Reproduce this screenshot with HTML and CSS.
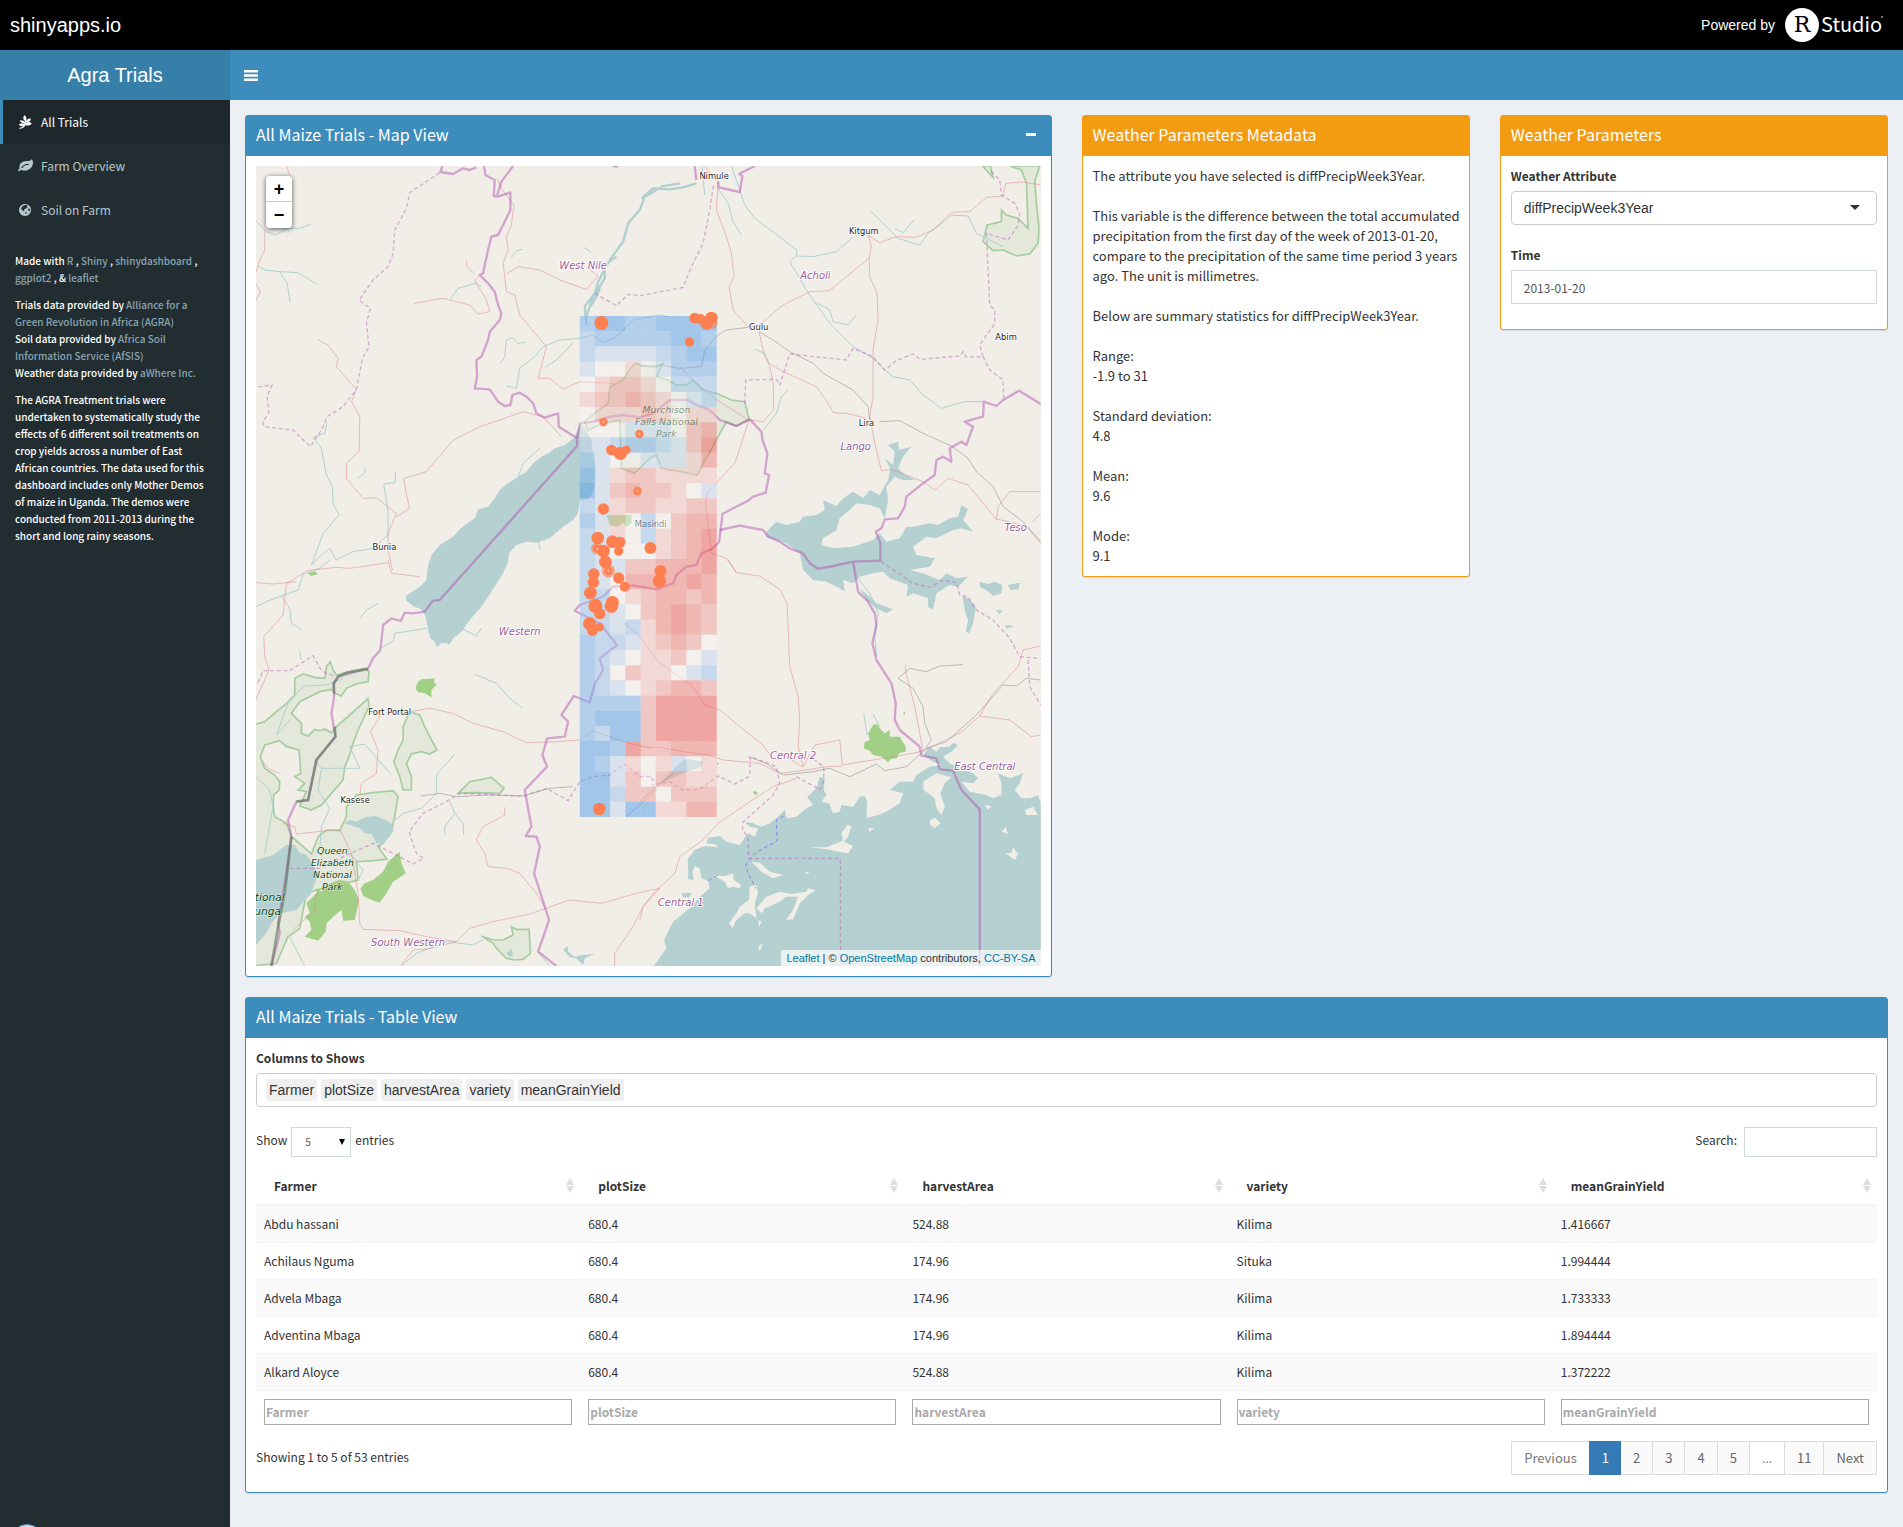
FILE: index.html
```html
<!DOCTYPE html>
<html lang="en">
<head>
<meta charset="utf-8">
<title>Agra Trials</title>
<link rel="stylesheet" href="styles.css">
</head>
<body>
<div class="hostbar">
  <a class="hostbar-name" href="#">shinyapps.io</a>
  <a class="hostbar-brand" href="#">
    <span>Powered by</span>
    <svg class="rstudio" viewBox="0 0 98 36" role="img" aria-label="RStudio">
      <circle cx="17" cy="18" r="17" fill="#fff"/>
      <text x="17" y="25" class="rstudio-r" text-anchor="middle">R</text>
      <text x="36" y="25" class="rstudio-name">Studio</text>
      <circle cx="97" cy="10" r="1" fill="#999"/>
    </svg>
  </a>
</div>

<header class="header">
  <a class="logo" href="#">Agra Trials</a>
  <nav class="navbar">
    <button class="toggle" type="button" aria-label="Toggle navigation">
      <svg viewBox="0 0 14 11"><path d="M0 0h14v2.500H0zM0 4.250h14v2.500H0zM0 8.500h14v2.500H0z"/></svg>
    </button>
  </nav>
</header>

<div class="wrapper">
  <aside class="sidebar">
    <nav class="menu">
      <a class="menu-item active" href="#">
        <svg viewBox="0 0 14 14"><path d="M1 13.700C.7 13.500.6 13 .9 12.700 3 12.400 4 12 5 11.200 3.500 11.600 1.300 11 .3 9.200 2.200 8 4.500 8.200 5.800 9.400L6.100 8.600C4.300 8.700 2 7.600 1.300 5.200 3.900 4.900 5.900 5.900 6.400 7.300L6.500 5.800C4.800 5.100 4.200 2.500 5.800.3 8 1.500 8.500 4 7.600 5.600L7.500 6.400C8 4.800 9.800 3.200 12.300 3.600 12.400 6 10.500 7.600 7.700 7.600L7.400 8.500C8.700 7.200 11.400 6.700 13.300 8.200 12.200 10.300 9.300 11 7.200 9.900 6 12.300 4 13.600 1 13.700z"/></svg>
        <span>All Trials</span>
      </a>
      <a class="menu-item" href="#">
        <svg viewBox="0 128 1792 1536"><path d="M1280 704q0-26-19-45t-45-19q-172 0-318 49.500t-259.500 134-235.500 219.500q-19 21-19 45 0 26 19 45t45 19q24 0 45-19 27-24 74-71t67-66q137-124 268.500-176t313.500-52q26 0 45-19t19-45zM1792 506q0 95-20 193-46 224-184.500 383t-357.500 268q-214 108-438 108-148 0-286-47-15-5-88-42t-96-37q-16 0-39.500 32t-45 70-52.500 70-60 32q-43 0-63.500-17.500t-45.500-59.500q-2-4-6-11t-5.500-10-3-9.500-1.500-13.500q0-35 31-73.500t68-65.500 68-56 31-48q0-4-14-38t-16-44q-9-51-9-104 0-115 43.500-220t119-184.500 170.500-139 204-95.500q55-18 145-25.500t179.500-9 178.500-6 163.500-24 113.500-56.500l29.500-29.500t29.500-28 27-20 36.500-16 43.500-4.500q39 0 70.500 46t47.500 112 24 124 8 96z"/></svg>
        <span>Farm Overview</span>
      </a>
      <a class="menu-item" href="#">
        <svg viewBox="0 0 14 14"><path fill-rule="evenodd" d="M6.500 1a6 6 0 1 0 .01 0zM6.500 2 8.600 2.300 9.300 3.200 8.300 3.600 9 4.400 7.800 5 7 6 6 6.300 5.200 7 6 7.800 5.600 8.500 4.400 7.400 3 6.500 2.800 5 4 3.200zM9.700 5.700 10.800 5.200 11.400 6.400 11.100 8 10.300 8.200 9.500 7.200zM7 9 8.400 9.400 8 10.600 7 11.300z"/></svg>
        <span>Soil on Farm</span>
      </a>
    </nav>
    <div class="credits">
      <p>Made with <a href="#">R</a> , <a href="#">Shiny</a> , <a href="#">shinydashboard</a> , <br><a href="#">ggplot2</a> , &amp; <a href="#">leaflet</a></p>
      <p>Trials data provided by <a href="#">Alliance for a<br>Green Revolution in Africa (AGRA)</a><br>
        Soil data provided by <a href="#">Africa Soil<br>Information Service (AfSIS)</a><br>
        Weather data provided by <a href="#">aWhere Inc.</a></p>
      <p>The AGRA Treatment trials were<br>undertaken to systematically study the<br>effects of 6 different soil treatments on<br>crop yields across a number of East<br>African countries. The data used for this<br>dashboard includes only Mother Demos<br>of maize in Uganda. The demos were<br>conducted from 2011-2013 during the<br>short and long rainy seasons.</p>
    </div>
    <div class="status-dot"></div>
  </aside>

  <main class="content">
    <section class="box primary map-box">
      <header class="box-header">
        <h2>All Maize Trials - Map View</h2>
        <button class="collapse" type="button" aria-label="Collapse"></button>
      </header>
      <div class="box-body">
        <div class="map">
          <svg class="map-canvas" viewBox="48 48 2355 2400" preserveAspectRatio="xMidYMid slice" role="img" aria-label="Map of Uganda with maize trials">
            <g class="park">
              <path transform="translate(0 1230)" d="M40 495 75 485 110 455 140 430 165 405 165 355 190 342 225 352 255 355 260 320 272 305 280 330 290 345 340 332 375 325 388 335 385 365 350 372 320 385 305 408 285 400 275 388 240 395 210 410 180 425 155 460 185 490 185 520 205 528 225 508 240 512 255 507 275 518 290 500 330 465 385 415 388 440 355 510 340 550 328 590 315 620 310 660 280 695 245 735 215 750 180 738 200 695 175 690 195 670 165 650 183 640 178 570 140 560 120 542 75 555 62 590 75 625 105 645 120 665 118 690 102 705 100 740 105 770 140 790 155 830 185 855 215 882 235 830 260 810 300 812 320 770 320 740 350 705 400 698 460 692 475 710 465 770 458 800 430 850 415 860 442 898 400 902 350 905 355 960 230 990 200 1000 180 1105 160 1120 145 1130 110 1210 40 1218Z"/>
              <path transform="translate(0 1230)" d="M510 455 540 465 555 500 570 530 592 570 570 582 545 575 515 582 500 610 515 650 515 690 490 690 480 650 462 605 475 570 490 540 490 500ZM655 700 690 665 755 652 793 685 780 700 700 698ZM725 1128 760 1140 790 1140 820 1125 815 1100 830 1108 868 1108 872 1180 850 1198 825 1200 800 1195 770 1165 760 1150Z"/>
              <path transform="translate(960 450)" d="M85 392 75 365 110 335 145 310 150 260 190 240 205 215 225 190 265 200 290 200 310 190 290 230 325 240 350 255 380 255 400 240 430 270 470 280 515 300 555 305 568 358 530 378 500 365 412 525 360 515 305 505 290 465 270 475 250 495 225 520 185 505 180 360 135 370 105 380Z"/>
              <path transform="translate(1200 0)" d="M1085 180 1100 195 1135 205 1165 235 1160 100 1145 60 1110 48 1200 48 1185 95 1190 160 1198 235 1195 280 1170 312 1130 318 1090 300 1060 302 1030 275 1042 225 1085 215ZM1028 48 1060 82 1052 48Z"/>
            </g>
            <g class="forest">
              <path transform="translate(0 1230)" d="M527 385 535 365 545 358 565 357 585 355 583 370 592 372 575 390 575 412 555 400 535 397ZM200 1030 230 1000 230 985 245 995 270 970 300 960 325 965 345 990 358 1020 345 1080 310 1082 305 1050 280 1070 260 1090 258 1115 235 1142 195 1130 215 1110 210 1085 195 1070 210 1060ZM362 985 375 970 400 960 430 935 445 905 480 875 485 910 498 940 460 965 440 1000 420 1028 395 1020 370 1008ZM202 40 225 34 235 42 215 48Z"/>
              <path transform="translate(1200 1230)" d="M685 520 700 495 712 492 722 507 735 520 750 510 750 530 780 530 798 560 798 575 780 578 770 595 752 598 745 607 725 590 700 585 690 572 672 565 675 545 690 540ZM342 692 355 698 348 706 340 698ZM790 455 797 458 794 466ZM230 606 238 610 234 616Z"/>
              <path d="M1100 1095 1175 1095 1175 1120 1160 1130 1150 1118 1135 1130 1110 1125Z"/>
            </g>
            <g class="water">
              <path d="M1005 862 975 885 945 895 930 908 905 920 880 940 860 965 835 980 800 1003 780 1020 765 1045 745 1070 715 1078 705 1105 680 1122 660 1138 640 1160 600 1185 575 1215 565 1245 560 1290 540 1310 498 1338 500 1352 520 1368 545 1378 558 1400 565 1440 572 1465 585 1475 592 1492 605 1478 630 1482 640 1465 665 1445 690 1410 725 1370 755 1325 790 1270 805 1235 808 1210 830 1185 860 1175 890 1178 930 1165 970 1130 1000 1110 1015 1090 1020 1050 1045 1048 1058 1030 1065 1000 1067 950 1058 900 1055 870 1035 835 1020 820Z"/>
              <path transform="translate(1200 1230)" d="M42 1218 80 1165 73 1140 100 1085 150 1045 180 1010 210 985 205 962 185 955 180 925 165 918 158 935 162 960 145 958 145 895 165 870 195 858 235 862 225 852 200 850 205 833 240 828 260 845 300 855 310 840 325 820 345 830 355 805 330 800 315 785 340 790 365 800 390 790 410 775 435 750 440 775 470 770 500 745 520 735 502 712 530 685 540 650 555 655 552 690 560 705 545 725 568 730 580 760 600 755 605 735 640 740 660 710 675 708 682 725 680 775 715 765 740 755 780 730 790 700 820 695 790 700 750 690 780 665 820 665 830 645 870 620 905 615 880 605 850 585 868 560 890 575 900 562 930 560 940 548 955 555 935 575 910 590 930 610 960 625 1000 640 1015 655 1000 670 965 665 990 695 1040 705 1060 715 1085 705 1085 670 1075 640 1110 655 1150 640 1140 670 1125 690 1145 715 1170 715 1195 705 1203 730 1203 1218Z"/>
              <path transform="translate(1200 0)" d="M380 1145 410 1115 440 1125 480 1115 490 1100 530 1095 555 1080 550 1050 590 1068 610 1045 640 1025 670 1045 690 1020 720 1035 745 990 752 955 735 925 760 945 765 905 745 885 775 875 778 900 815 890 790 920 775 955 790 970 825 990 790 990 765 980 740 1010 745 1050 735 1105 720 1075 690 1065 650 1060 630 1080 600 1105 590 1140 550 1165 545 1185 580 1195 640 1190 700 1170 720 1150 740 1175 780 1165 800 1130 820 1130 870 1120 895 1125 930 1105 955 1100 965 1065 985 1078 970 1110 1000 1145 965 1135 940 1140 890 1165 860 1160 820 1190 830 1215 885 1225 870 1250 810 1260 850 1270 900 1290 920 1270 950 1285 985 1280 955 1310 930 1305 890 1330 880 1380 865 1370 865 1345 820 1330 800 1340 805 1305 750 1285 730 1265 700 1270 660 1280 640 1300 610 1290 615 1325 600 1315 560 1295 520 1290 490 1260 480 1210 440 1180 380 1160Z"/>
              <path transform="translate(1200 1230)" d="M1018 65 1045 72 1065 65 1088 75 1085 100 1060 108 1040 90 1022 82ZM1105 75 1142 68 1135 88 1112 90ZM968 108 985 115 1008 140 1000 190 988 220 978 215 985 180 975 150ZM1068 150 1090 152 1078 162ZM1095 195 1124 198 1100 206ZM660 85 690 110 710 130 760 148 740 160 710 145 680 120ZM125 1000 155 998 150 1012 130 1012ZM90 640 130 600 150 598 190 605 185 620 130 640 85 660 55 675Z"/>
              <path transform="translate(0 1230)" d="M48 900 100 885 140 855 165 855 180 878 200 885 215 905 235 940 215 1000 170 1050 120 1060 95 1090 80 1120 48 1155ZM315 790 330 780 350 785 375 772 405 768 440 780 455 792 462 810 450 830 430 852 410 850 395 822 375 820 360 805ZM970 1170 985 1158 985 1175 1005 1190 1030 1185 1065 1182 1035 1195 1030 1215 1010 1195 990 1192ZM800 1180 815 1165 820 1185 810 1192Z"/>
            </g>
            <g class="land" transform="translate(1200 1230)">
              <path d="M510 862 560 862 590 850 610 842 605 820 622 795 635 798 625 830 612 845 640 858 625 880 600 876 560 868ZM850 665 890 640 935 652 915 670 902 700 915 740 905 765 890 745 885 715 852 690ZM870 782 885 772 902 790 885 805 872 795ZM1098 880 1115 878 1120 862 1135 882 1125 900 1112 890ZM1085 815 1098 800 1104 822ZM1155 750 1180 740 1195 765 1160 765ZM1035 735 1055 738 1045 750ZM220 945 255 948 280 940 282 960 305 975 300 985 278 980 265 985 255 965ZM330 980 350 975 355 1000 345 1030 350 1075 330 1060 315 1060 290 1080 278 1105 268 1090 290 1060 300 1040 328 1020ZM335 905 360 908 390 935 430 945 400 955 365 935ZM380 1010 420 995 455 1002 500 995 505 985 528 990 505 1005 480 1030 460 1078 438 1080 460 1050 475 1010 440 1010 420 1025 375 1045 365 1060 350 1045ZM685 805 705 803 690 815ZM495 935 510 938 500 942ZM355 1080 365 1085 358 1102ZM370 1150 360 1175 355 1160ZM385 1150 380 1175Z"/>
            </g>
            <g class="stream">
              <path d="M48 212 80 245 110 255 140 235 180 235 215 222M55 348 75 360 120 365 175 368 230 402M120 365 142 400 152 458M632 447 655 415 705 400 725 410M815 323 830 302 848 298M1032 292 1055 308M782 640 795 620 800 570 820 563 835 580 858 577M800 708 830 715 840 655 885 620 910 590 960 570 1020 565 1060 555 1090 578 1130 560 1180 510 1260 495 1285 500M915 652 950 630 980 600 1000 578M835 982 850 940 900 895M355 985 375 968 377 952M468 965 465 998 432 1002 445 1085 445 1155 400 1195 340 1205 290 1230 270 1195 245 1215 215 1245M262 815 255 850 220 862 245 895 260 975 278 1010 280 1060 298 1095 250 1150 215 1245M895 1175 902 1198"/>
              <path class="river" d="M1040 525 1035 470 1065 430 1075 395 1110 330 1150 275 1165 220 1200 180 1215 140 1270 108 1320 100M1040 500 1060 440 1095 385 1095 345 1130 320M1205 145 1240 115 1290 118 1330 112 1370 100M1085 400 1070 440 1045 480"/>
              <path transform="translate(1200 0)" d="M187 48 195 135M235 115 265 160 280 215 305 255M275 48 300 120 315 165 345 205 405 250 470 300 470 318 520 320 590 305 640 260M690 182 710 200 775 265 840 285 865 250 900 225 935 195 985 198 1010 250 1090 290M470 318 450 335 500 420 570 520 640 590M535 460 570 480 580 515 625 525 650 495M825 208 790 248 765 235M345 598 375 610 388 640M445 720 425 740 410 790 370 840M640 590 675 610 700 625 735 660 760 680 810 690 850 735 905 775 975 755 1030 755M1203 1090 1180 1115"/>
              <path transform="translate(0 1230)" d="M270 0 240 25 190 42 175 90 125 108 80 125 48 140M125 108 150 145 155 190 185 208M362 175 380 150 415 130M425 262 460 245 465 220 560 205M665 205 710 228 725 205M705 343 770 370 805 410 848 445M310 355 260 375 190 378 145 430 110 525 150 480M48 650 90 690 100 740 75 880M645 582 590 645 590 700 545 745 490 760 460 785M630 725 645 760 615 800 615 825M645 760 670 790 672 825M225 600 245 625 360 625 330 560 375 552 455 645M245 625 235 690 270 745 245 800 240 870M150 1130 165 1160 195 1218M485 1218 530 1180 620 1145 700 1155 730 1140M895 1175 930 1218M180 275 185 300M355 905 330 880 370 930 355 960"/>
              <path transform="translate(1200 1230)" d="M672 460 682 525M700 462 720 500M650 50 690 100 715 160 705 230 710 290"/>
            </g>
            <g class="road">
              <path d="M140 48 155 90M75 240 75 300 60 330 48 370M48 400 62 425 48 452M232 568 265 585 295 625 290 650 350 718 335 755 360 800 358 905 320 940 320 985 370 1045 410 1043 470 1090 445 1150 445 1200 458 1260M470 1100 510 1075 500 1035 492 985 560 965 640 870 720 830 780 810 850 785 910 800 965 860M772 85 785 115 822 165 815 225 800 260 805 300 790 340 800 425 825 435 840 495 920 590 895 685 930 685 970 718 1020 695 1120 700M800 372 835 350 900 360 960 390 1040 418 1075 378 1045 355M522 460 610 445 690 465 715 492 750 485 740 450 705 390 720 375M680 332 682 350 705 372"/>
              <path transform="translate(1200 0)" d="M195 48 235 95 230 180 260 260 275 310 283 380 268 410 280 480 325 530 358 525 430 465 510 425 570 422 620 380 688 325 695 290 685 255 720 278 770 260 830 262 880 240 935 187 990 185 1040 142 1090 138 1098 100 1150 96 1203 105M688 325 690 380 712 430 715 510 700 600 700 740 690 800 705 880 725 962 755 958 850 995 885 1020 925 985 985 1005 1070 1108 1095 1112M1070 1108 1075 1070 1110 1025 1203 1025M1095 1112 1160 1130 1203 1180M358 545 372 610 390 650 400 700 402 780 370 815 328 810 285 940 205 1025 197 1060 215 1210 260 1225 290 1268M388 640 430 665 530 710 565 760 580 788 620 790 680 805M120 650 180 710 240 755 325 810"/>
              <path transform="translate(0 1230)" d="M445 0 455 40 540 50M445 8 330 25 290 22 200 32 160 60 140 70 130 165 72 230 75 290 88 330 48 420M48 68 100 72 170 65M510 455 570 445 640 460 700 490 790 515 860 548 950 545 1020 540 1060 512 1110 530 1150 545 1235 565M430 455 392 515 415 570 410 640 365 670 360 705M65 600 85 625 120 640M130 790 165 800 170 822 300 808 335 880 355 1000 360 1090 370 1108 480 1112 560 1130 650 1145 690 1105 760 1085 870 1062 990 1020 1085 1030 1190 1000 1260 985M915 1040 890 1000 840 940 800 925 745 920 735 880 710 840 730 800 795 765 795 742M485 1215 520 1170 570 1165 650 1145M1260 985 1210 1040 1180 1100 1125 1180 1125 1218M230 1000 225 1050 160 1110"/>
              <path transform="translate(1200 1230)" d="M265 0 290 38 360 48 420 88 442 130 450 320 475 410 480 480 475 560 490 620 525 555 600 540 608 615 700 600 820 580 850 572 825 440 800 345 797 315M-50 185 0 230 60 310 120 350 160 380 195 435 240 450 325 520 370 555 400 600 440 590 490 622M608 618 560 620 500 630 420 640 360 610 250 600 205 585 130 575 60 562 0 560M470 655 400 680 330 725 235 790 190 840 120 890 105 940 45 995 10 1040 0 1080M850 572 960 520 1020 468 1060 400 1135 320 1150 270 1203 258M1020 468 1110 480 1175 530 1203 525"/>
            </g>
            <g class="rail">
              <path transform="translate(1200 0)" d="M325 532 260 540 235 555 195 600 185 650 120 655 60 645 0 650M358 545 400 570 450 605 520 640 550 670 640 720 685 770 690 810M720 815 780 812 850 850 935 888 985 925 1010 965 1060 1010 1090 1070 1150 1115 1203 1175"/>
              <path transform="translate(0 1230)" d="M543 708 600 700 650 710 750 705 850 708 930 685 1000 680M1160 770 1200 735 1260 680"/>
              <path transform="translate(1200 1230)" d="M325 590 380 610 430 645 520 635 570 625 630 650 710 612 735 632 800 620 850 575 875 540 855 490 850 440 820 385 775 355 810 325 860 335 900 318 970 314M860 565 920 545 1010 465 1090 375 1130 378 1160 355 1203 360M0 725 50 680 100 640"/>
            </g>
            <g class="dashed">
              <path d="M600 68 510 128 500 175 465 240 460 310 445 350 400 390 358 450 392 475 380 520 388 590 368 625 350 718 310 770 262 800 245 840 212 890 160 840 72 830 70 815 88 785 82 740 97 705 48 712M1065 430 1130 467 1165 433 1200 437 1330 412 1355 350 1390 280 1410 180 1422 100"/>
              <path transform="translate(1200 0)" d="M315 760 318 690 410 688 420 705 450 612 620 630 640 595 700 620 735 660 770 632 820 612 840 628 960 618 970 605 980 622 1030 620 1020 585 1065 520 1065 480 1050 465 1040 250 1105 270 1135 225 1140 190 1125 160 1085 135 1080 90 1050 60M1030 620 1050 660 1090 690 1092 745M725 1235 820 1300 870 1312 910 1290 950 1298 960 1335 985 1340 1010 1380 1060 1410 1110 1465 1140 1520 1203 1526M1165 1530 1170 1610 1203 1665"/>
              <path transform="translate(0 1230)" d="M55 368 70 332 150 332 220 287 245 332 285 350M150 925 240 925 310 890 400 850 460 880 520 912 552 895 530 880 508 815 550 760 620 725 660 700 850 708 920 685 985 722 1020 665 1060 650 1110 645 1155 612 1200 650 1235 648 1240 680"/>
              <path transform="translate(1200 1230)" d="M0 650 35 650 50 672 90 665 130 690 180 688 235 648 285 672 330 648 332 590 410 620 420 670 400 705 345 755 310 785 308 805 325 835 327 895 602 895 602 1218M470 650 525 680 540 690 552 665 552 620 525 600"/>
            </g>
            <g class="ferry" transform="translate(1200 1230)"><path d="M432 768 410 780 412 842 345 880 318 915 325 940 348 985M205 962 235 945"/></g>
            <g class="border">
              <path d="M608 48 602 66 640 72 670 55 690 60 710 52M733 48 737 75 765 90 762 138 775 140 812 127 812 180 790 225 775 255 755 260 745 300 735 345 730 370 720 375 745 400 765 425 775 465 785 490 780 510 750 545 745 570 725 620 710 630 712 680 705 715 750 718 775 755 795 768 812 765 818 735 840 728 860 740 880 760 890 790 915 803 955 790 957 830 1012 865 1012 888 600 1350 580 1352 555 1385 520 1390 495 1388 483 1413 455 1405 430 1425 422 1500 400 1525 385 1555 295 1580 282 1600 283 1640 275 1690 287 1760 230 1830 205 1950 170 1955 145 2010 155 2060 135 2200 115 2320 120 2350 95 2448M820 48 785 95 772 138M1118 48 1135 50"/>
              <path d="M1012 865 1022 820 1060 815 1110 800 1150 795 1200 802 1240 790 1290 750 1345 750 1370 765 1410 780 1440 810 1490 828 1530 808 1565 845 1568 870 1583 910 1575 970 1588 975 1578 1028 1540 1040 1525 1052 1480 1075 1448 1092 1445 1120 1438 1175 1420 1195 1385 1210 1370 1245 1340 1250 1310 1275 1300 1300 1250 1318 1180 1306 1120 1310 1090 1340 1020 1365 1005 1382 1080 1420 1132 1485 1080 1525 1090 1560 1065 1602 1050 1657 1002 1638 965 1695 985 1715 975 1760 922 1765 908 1815 922 1850 855 1920 875 2030 858 2058 890 2060 900 2090 883 2170 915 2270 928 2310 895 2405 950 2448"/>
              <path transform="translate(1200 0)" d="M240 1140 300 1127 370 1140 385 1160 420 1175 450 1195 490 1210 510 1240 535 1256 580 1248 640 1235 722 1232 722 1180 708 1145 725 1135 735 1108 775 1105 795 1070 800 1040 850 1000 885 975 890 930 910 920 935 935 930 895 965 875 980 885 1000 830 975 815 1030 800 1032 755 1070 768 1090 750 1138 722 1203 762M640 1235 655 1325 685 1355 705 1390 710 1425 698 1480 710 1530 755 1600 768 1660 765 1710 780 1740 840 1790 845 1817 890 1825 900 1858 940 1862 965 1920 1020 1978 1020 2448M165 48 170 90M235 95 237 112 300 126 308 78 298 72 345 48"/>
            </g>
            <g class="border-dark"><path d="M385 1557 320 1568 295 1580 282 1600 283 1630M285 1730 287 1760 230 1830 205 1950 170 1955M155 2060 135 2230 115 2330 95 2448"/></g>
            <g class="label town">
              <text x="1423" y="87">Nimule</text><text x="1872" y="252">Kitgum</text><text x="1557" y="540">Gulu</text><text x="2299" y="570">Abim</text><text x="1880" y="827">Lira</text><text x="434" y="1200">Bunia</text><text x="1233" y="1130">Masindi</text><text x="450" y="1695">Fort Portal</text><text x="346" y="1959">Kasese</text>
            </g>
            <g class="label region">
              <text x="1030" y="357">West Nile</text><text x="1727" y="387">Acholi</text><text x="1848" y="900">Lango</text><text x="2328" y="1144">Teso</text><text x="840" y="1456">Western</text><text x="1660" y="1826">Central 2</text><text x="2235" y="1861">East Central</text><text x="1323" y="2267">Central 1</text><text x="505" y="2388">South Western</text>
            </g>
            <g class="label reserve">
              <text x="1280" y="788">Murchison</text><text x="1280" y="824">Falls National</text><text x="1280" y="860">Park</text>
              <text x="278" y="2112">Queen</text><text x="278" y="2148">Elizabeth</text><text x="278" y="2184">National</text><text x="278" y="2220">Park</text>
              <g class="large"><text x="90" y="2252">tional</text><text x="84" y="2294">unga</text></g>
            </g>
            <g id="heat" transform="translate(1020 498)"></g>
            <g id="trials" transform="translate(960 450)"></g>
          </svg>
          <div class="zoom-control">
            <button type="button" aria-label="Zoom in">+</button>
            <button type="button" aria-label="Zoom out">−</button>
          </div>
          <div class="attribution"><a href="#">Leaflet</a> | © <a href="#">OpenStreetMap</a> contributors, <a href="#">CC-BY-SA</a></div>
        </div>
      </div>
    </section>

    <section class="box warning">
      <header class="box-header"><h2>Weather Parameters Metadata</h2></header>
      <div class="box-body metadata">
        <p>The attribute you have selected is diffPrecipWeek3Year.</p>
        <p>This variable is the difference between the total accumulated<br>precipitation from the first day of the week of 2013-01-20,<br>compare to the precipitation of the same time period 3 years<br>ago. The unit is millimetres.</p>
        <p>Below are summary statistics for diffPrecipWeek3Year.</p>
        <p>Range:<br>-1.9 to 31</p>
        <p>Standard deviation:<br>4.8</p>
        <p>Mean:<br>9.6</p>
        <p>Mode:<br>9.1</p>
      </div>
    </section>

    <section class="box warning">
      <header class="box-header"><h2>Weather Parameters</h2></header>
      <div class="box-body params">
        <div class="field">
          <label for="attribute">Weather Attribute</label>
          <div class="select-wrap">
            <select id="attribute" class="control rounded"><option>diffPrecipWeek3Year</option></select>
          </div>
        </div>
        <div class="field">
          <label for="time">Time</label>
          <input id="time" class="control" type="text" value="2013-01-20">
        </div>
      </div>
    </section>

    <section class="box primary table-box">
      <header class="box-header"><h2>All Maize Trials - Table View</h2></header>
      <div class="box-body">
        <div class="field">
          <label for="columns">Columns to Shows</label>
          <div class="control rounded tags">
            <span>Farmer</span><span>plotSize</span><span>harvestArea</span><span>variety</span><span>meanGrainYield</span>
            <input id="columns" type="text">
          </div>
        </div>
        <div class="toolbar">
          <div class="length">
            <label for="length">Show</label>
            <div class="select-wrap small"><select id="length"><option>5</option></select></div>
            <span>entries</span>
          </div>
          <div class="search">
            <label for="search">Search:</label>
            <input id="search" type="search">
          </div>
        </div>
        <table class="data">
          <thead>
            <tr><th>Farmer</th><th>plotSize</th><th>harvestArea</th><th>variety</th><th>meanGrainYield</th></tr>
          </thead>
          <tbody>
            <tr><td>Abdu hassani</td><td>680.4</td><td>524.88</td><td>Kilima</td><td>1.416667</td></tr>
            <tr><td>Achilaus Nguma</td><td>680.4</td><td>174.96</td><td>Situka</td><td>1.994444</td></tr>
            <tr><td>Advela Mbaga</td><td>680.4</td><td>174.96</td><td>Kilima</td><td>1.733333</td></tr>
            <tr><td>Adventina Mbaga</td><td>680.4</td><td>174.96</td><td>Kilima</td><td>1.894444</td></tr>
            <tr><td>Alkard Aloyce</td><td>680.4</td><td>524.88</td><td>Kilima</td><td>1.372222</td></tr>
          </tbody>
          <tfoot>
            <tr>
              <td><input type="text" placeholder="Farmer" aria-label="Farmer"></td>
              <td><input type="text" placeholder="plotSize" aria-label="plotSize"></td>
              <td><input type="text" placeholder="harvestArea" aria-label="harvestArea"></td>
              <td><input type="text" placeholder="variety" aria-label="variety"></td>
              <td><input type="text" placeholder="meanGrainYield" aria-label="meanGrainYield"></td>
            </tr>
          </tfoot>
        </table>
        <div class="table-footer">
          <span>Showing 1 to 5 of 53 entries</span>
          <nav class="pages">
            <a class="off" href="#">Previous</a><a class="current" href="#">1</a><a href="#">2</a><a href="#">3</a><a href="#">4</a><a href="#">5</a><a class="off gap" href="#">…</a><a href="#">11</a><a href="#">Next</a>
          </nav>
        </div>
      </div>
    </section>
  </main>
</div>
<script src="map.js"></script>
</body>
</html>
```
FILE: styles.css
```css
* { box-sizing: border-box; }

body {
  margin: 0;
  min-height: 100vh;
  display: flex;
  flex-direction: column;
  background: #ecf0f5;
  color: #333;
  font: 12px/20px "Noto Sans CJK SC", "Open Sans", sans-serif;
}

a { text-decoration: none; }
p, h2 { margin: 0; }
button, input, select { font: inherit; color: inherit; margin: 0; }

/* hosting bar */
.hostbar {
  height: 50px;
  padding: 0 20px 0 10px;
  display: flex;
  align-items: center;
  justify-content: space-between;
  background: #000;
  font-family: "Liberation Sans", Arial, sans-serif;
}
.hostbar a { color: #fff; }
.hostbar-name { font-size: 20px; }
.hostbar-brand { display: flex; align-items: center; gap: 10px; font-size: 14px; }
.rstudio { width: 98px; height: 36px; fill: #fff; }
.rstudio-r { font: 22px "DejaVu Serif", serif; fill: #000; }
.rstudio-name { font: 20px "Noto Sans CJK SC", sans-serif; }

/* application header */
.header { display: flex; height: 50px; }
.logo {
  width: 230px;
  background: #367fa9;
  color: #fff;
  font: 20px/50px "Liberation Sans", Arial, sans-serif;
  text-align: center;
}
.navbar { flex: 1; display: flex; background: #3c8dbc; }
.toggle { border: 0; background: none; padding: 0 14px; display: flex; align-items: center; }
.toggle svg { width: 14px; height: 11px; fill: #fff; }

/* sidebar */
.wrapper { flex: 1; display: flex; }
.sidebar { width: 230px; flex: none; background: #222d32; color: #fff; }
.menu-item {
  display: flex;
  align-items: center;
  gap: 8px;
  height: 44px;
  padding: 0 15px;
  border-left: 3px solid transparent;
  color: #b8c7ce;
}
.menu-item.active { background: #1e282c; border-color: #3c8dbc; color: #fff; }
.menu-item svg { width: 15px; height: 14px; fill: currentColor; }
.credits {
  padding: 20px 10px 0 15px;
  font-size: 10px;
  font-weight: 500;
  line-height: 17px;
  white-space: nowrap;
}
.credits p { margin-bottom: 10px; }
.credits a { color: #8aa4af; }
.status-dot {
  position: fixed;
  left: 11px;
  bottom: -29px;
  width: 32px;
  height: 32px;
  border: 1px solid #3c8dbc;
  border-radius: 50%;
  background: #d5dde6;
}

/* boxes */
.content {
  flex: 1;
  min-width: 0;
  padding: 15px;
  display: grid;
  grid-template-columns: repeat(4, minmax(0, 1fr));
  gap: 20px 30px;
  align-content: start;
  align-items: start;
}
.box { border: 1px solid; border-radius: 3px; background: #fff; box-shadow: 0 1px 1px rgba(0, 0, 0, .1); }
.primary { border-color: #3c8dbc; }
.warning { border-color: #f39c12; }
.map-box { grid-column: span 2; }
.table-box { grid-column: 1 / -1; }
.box-header {
  height: 40px;
  padding: 0 10px 4px;
  display: flex;
  align-items: center;
  justify-content: space-between;
  color: #fff;
}
.primary .box-header { background: #3c8dbc; }
.warning .box-header { background: #f39c12; }
.box-header h2 { font-size: 16px; font-weight: 400; line-height: 20px; }
.collapse { border: 0; padding: 0; width: 20px; height: 20px; background: linear-gradient(#fff, #fff) center / 10px 3px no-repeat; }
.box-body { padding: 10px; }
.metadata { display: grid; gap: 20px; font-size: 13px; white-space: nowrap; }

/* map */
.map { position: relative; height: 800px; overflow: hidden; background: #f1eee8; }
.map-canvas { display: block; width: 100%; height: 100%; fill: none; }
.water { fill: #b5d0d0; }
.land { fill: #f1eee8; }
.forest { fill: #a0cf85; }
.park { fill: rgba(150, 200, 150, .15); stroke: rgba(120, 185, 115, .6); stroke-width: 5; }
.stream { stroke: #b0d0d0; stroke-width: 3; }
.river { stroke-width: 7; }
.road { stroke: rgba(222, 130, 135, .5); stroke-width: 3; }
.rail { stroke: rgba(120, 120, 120, .45); stroke-width: 3; }
.dashed { stroke: rgba(190, 100, 190, .5); stroke-width: 4; stroke-dasharray: 12 8; }
.ferry { stroke: rgba(90, 90, 255, .6); stroke-width: 3; stroke-dasharray: 12 8; }
.border { stroke: rgba(172, 70, 172, .45); stroke-width: 7; stroke-linejoin: round; }
.border-dark { stroke: rgba(90, 120, 90, .6); stroke-width: 8; }
.label { text-anchor: middle; paint-order: stroke; stroke: #fff; stroke-width: 6; stroke-linejoin: round; font-family: "DejaVu Sans", sans-serif; }
.town { font-size: 25px; fill: #222; stroke-width: 4; }
.region { font-size: 30px; font-style: italic; fill: #9a609a; }
.reserve { font-size: 28px; font-style: italic; fill: #0c4a10; stroke: rgba(255, 255, 255, .5); stroke-width: 4; }
.large { font-size: 32px; }
.zoom-control {
  position: absolute;
  left: 10px;
  top: 10px;
  display: grid;
  border-radius: 4px;
  overflow: hidden;
  box-shadow: 0 1px 5px rgba(0, 0, 0, .65);
}
.zoom-control button {
  width: 26px;
  height: 26px;
  border: 0;
  padding: 0;
  background: #fff;
  color: #000;
  font: bold 18px/26px "Liberation Sans", Arial, sans-serif;
}
.zoom-control button:first-child { border-bottom: 1px solid #ccc; }
.attribution {
  position: absolute;
  right: 0;
  bottom: 0;
  padding: 0 5px;
  background: rgba(255, 255, 255, .7);
  font: 11px/16px "Liberation Sans", Arial, sans-serif;
}
.attribution a { color: #0078a8; }

/* form controls */
.field label { display: block; margin-bottom: 5px; font-weight: 700; }
.control {
  display: block;
  width: 100%;
  height: 34px;
  padding: 0 12px;
  border: 1px solid #d2d6de;
  border-radius: 0;
  background: #fff;
  color: #555;
}
.control.rounded {
  border-color: #ccc;
  border-radius: 4px;
  color: #333;
  font: 14px/20px "Liberation Sans", Arial, sans-serif;
}
.params { display: grid; gap: 20px; padding-bottom: 25px; }
select { appearance: none; }
.select-wrap { position: relative; }
.select-wrap::after {
  content: "";
  position: absolute;
  right: 17px;
  top: 14px;
  border: 5px solid transparent;
  border-top-color: #333;
  border-bottom: 0;
}
.control.tags { display: flex; align-items: center; gap: 4px; padding: 0 9px; }
.tags span { padding: 1px 3px; border-radius: 3px; background: #efefef; }
.tags input { flex: 1; min-width: 20px; border: 0; padding: 0; outline: 0; }

/* data table */
.toolbar { display: flex; justify-content: space-between; margin-top: 20px; }
.length, .search { display: flex; gap: 4px; line-height: 26px; }
.search { gap: 7px; }
.length select, .search input {
  display: block;
  height: 30px;
  border: 1px solid #d2d6de;
  background: #fff;
  color: #555;
}
.length select { width: 60px; padding: 0 13px; font-size: 10px; }
.search input { width: 133px; }
.small::after { right: 6px; top: 12px; border-width: 6px 3px 0; border-top-color: #000; }
.data { width: 100%; margin-top: 10px; table-layout: fixed; border-collapse: separate; border-spacing: 0; }
.data th {
  height: 39px;
  padding: 0 18px;
  border-bottom: 2px solid #f4f4f4;
  text-align: left;
  font-weight: 700;
  background:
    conic-gradient(from 153deg at 50% 0, transparent 0) no-repeat,
    linear-gradient(transparent, transparent);
  position: relative;
}
.data th::before, .data th::after {
  content: "";
  position: absolute;
  right: 6px;
  border: 4px solid transparent;
}
.data th::before { top: 11px; border-top: 0; border-bottom: 7px solid #ddd; }
.data th::after { top: 19px; border-bottom: 0; border-top: 7px solid #ddd; }
.data td { height: 37px; padding: 0 8px; border-bottom: 1px solid #f4f4f4; }
.data tbody tr:nth-child(odd) { background: #f9f9f9; }
.data tfoot td { height: 42px; border: 0; }
.data tfoot input {
  display: block;
  width: 100%;
  height: 26px;
  border: 1px solid #a9a9a9;
  padding: 0 1px 2px;
  font-weight: 700;
}
.data tfoot input::placeholder { color: #a9a9a9; opacity: 1; }
.table-footer { display: flex; justify-content: space-between; padding: 8px 0 7px; line-height: 32px; }
.pages { display: flex; border: 1px solid #ddd; font-size: 13px; }
.pages a { padding: 0 12px; background: #fafafa; color: #666; border-left: 1px solid #ddd; }
.pages a:first-child { border-left: 0; }
.pages .off { background: #fff; color: #777; }
.pages .gap { font-family: "Open Sans", sans-serif; }
.pages .current { margin: -1px 0; line-height: 34px; background: #337ab7; color: #fff; border-color: #337ab7; }
.pages .current + a { border-left: 0; }
```
FILE: map.js
```js
// Precipitation difference per grid cell: 0 = strongest blue, 4 = neutral, 8 = strongest red.
const rows = [
  "100110000", "211111001", "233332100", "344543111", "456654222", "566765432",
  "455565455", "444333467", "332112368", "234433357", "135665555", "036766543",
  "235665566", "135424677", "235425678", "234445678", "233667778", "234777787",
  "224567767", "223467876", "223257876", "122356764", "123455643", "124655432",
  "123456776", "111168888", "100068888", "120068888", "001866777", "013545345",
  "003646655", "002664666", "003005577"
];
const neutral = [245, 242, 243], blue = [84, 158, 236], red = [238, 92, 90];
const ns = "http://www.w3.org/2000/svg";

function add(parent, name, attrs) {
  const el = document.createElementNS(ns, name);
  for (const key in attrs) el.setAttribute(key, attrs[key]);
  document.getElementById(parent).appendChild(el);
}

rows.forEach((row, r) => [...row].forEach((value, c) => {
  const end = value < 4 ? blue : red;
  const t = Math.pow(Math.abs(value - 4) / 4, 0.85);
  const rgb = neutral.map((n, i) => Math.round(n + (end[i] - n) * t));
  const x = Math.round(c * 411 / 9), y = Math.round(r * 1503 / 33);
  add("heat", "rect", {
    x, y,
    width: Math.round((c + 1) * 411 / 9) - x,
    height: Math.round((r + 1) * 1503 / 33) - y,
    fill: `rgb(${rgb})`, "fill-opacity": 0.5
  });
}));

// Trial sites: x, y, radius.
const sites = [
  [125, 69, 21], [405, 54, 16], [422, 57, 15], [455, 54, 19], [440, 70, 19], [389, 126, 14],
  [155, 450, 16], [182, 460, 20], [200, 450, 13], [131, 627, 17], [114, 714, 19], [131, 753, 19],
  [158, 725, 19], [180, 727, 17], [177, 753, 14], [272, 744, 18], [137, 786, 19], [102, 822, 17],
  [101, 847, 17], [177, 834, 17], [195, 860, 15], [92, 879, 19], [107, 918, 21], [120, 941, 17],
  [158, 907, 19], [155, 919, 20], [90, 971, 20], [98, 992, 16], [120, 981, 13], [302, 813, 18],
  [299, 843, 20], [119, 1527, 19]
];
const faded = [[112, 746, 18], [146, 813, 20], [457, 70, 17]];
const rings = [[131, 366], [239, 402], [233, 573], [112, 746], [146, 813]];

faded.forEach(([cx, cy, r]) => add("trials", "circle", { cx, cy, r, fill: "#ff7f50", "fill-opacity": 0.6 }));
sites.forEach(([cx, cy, r]) => add("trials", "circle", { cx, cy, r, fill: "#ff7f50" }));
rings.forEach(([cx, cy]) => add("trials", "circle", { cx, cy, r: 8, fill: "#ffc0a8", stroke: "#ff7f50", "stroke-width": 9 }));
```
